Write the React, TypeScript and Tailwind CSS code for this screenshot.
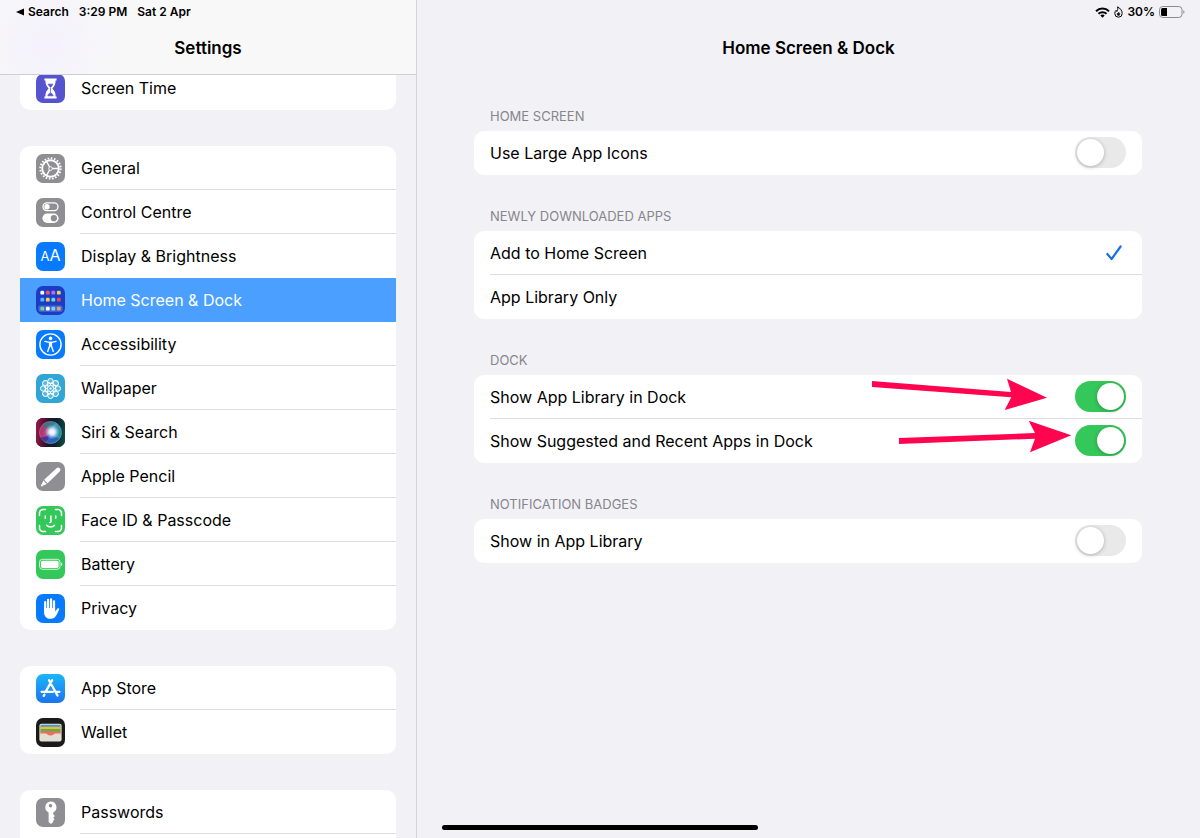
import type { ReactNode } from "react";
import clsx from "clsx";

const GeneralIcon = (
  <svg viewBox="0 0 29 29" className="size-full bg-[#8e8e93]" fill="none" stroke="#fff">
    <circle cx="14.5" cy="14.5" r="10.2" strokeWidth="2" strokeDasharray="1.6 1.604" />
    <circle cx="14.5" cy="14.5" r="8.3" strokeWidth="1.9" />
    <circle cx="14.5" cy="14.5" r="1.8" strokeWidth="1" />
    <path d="M16.3 14.5H22M13.6 13l-3-5.4M13.6 16l-3 5.4" strokeWidth="1.4" />
  </svg>
);

const ControlCentreIcon = (
  <svg viewBox="0 0 29 29" className="size-full bg-[#8e8e93]">
    <rect x="7" y="4.8" width="15" height="7.8" rx="3.9" fill="none" stroke="#fff" strokeWidth="1.3" />
    <circle cx="11" cy="8.7" r="2.7" fill="#fff" />
    <rect x="6.4" y="15.5" width="16.2" height="9.4" rx="4.7" fill="#fff" />
    <circle cx="17.9" cy="20.2" r="3.1" fill="#8e8e93" />
  </svg>
);

const DisplayIcon = (
  <span className="flex size-full items-baseline justify-center bg-[#087aff] leading-[29px] text-white">
    <span className="text-[13px]">A</span>
    <span className="text-base">A</span>
  </span>
);

const dots = [
  ["#fff", "#f2526b", "#b36df0", "#e8d94c"],
  ["#4fb7f5", "#f6d24a", "#66d6f2", "#e8445e"],
];

const HomeScreenIcon = (
  <svg viewBox="0 0 29 29" className="size-full bg-[#1c3cc6]">
    {dots.map((row, y) =>
      row.map((color, x) => (
        <rect key={`${x}-${y}`} x={4.4 + x * 5.5} y={4.8 + y * 7} width="3.8" height="3.8" rx="1.2" fill={color} />
      )),
    )}
    <rect x="2.4" y="19.4" width="24.2" height="6.4" rx="1.8" fill="#4468d8" />
    {["#6fd888", "#fff", "#7fd0f5", "#e8a06c"].map((color, x) => (
      <rect key={color} x={4.4 + x * 5.5} y="20.7" width="3.8" height="3.8" rx="1.2" fill={color} />
    ))}
  </svg>
);

const AccessibilityIcon = (
  <svg viewBox="0 0 29 29" className="size-full bg-[#087aff]">
    <circle cx="14.5" cy="14.5" r="10.6" fill="none" stroke="#fff" strokeWidth="1.4" />
    <circle cx="14.5" cy="8.4" r="1.8" fill="#fff" />
    <path d="M13 11.8h3v5h-3z" fill="#fff" />
    <path
      d="M8.9 11.4l4.4 1h2.4l4.400-1M13.600 12.600v3.400l-1.900 5.400M15.400 12.600v3.400l1.900 5.400"
      fill="none"
      stroke="#fff"
      strokeWidth="1.4"
      strokeLinecap="round"
      strokeLinejoin="round"
    />
  </svg>
);

const WallpaperIcon = (
  <svg viewBox="0 0 29 29" className="size-full bg-[#31a6d6]">
    <g fill="#8fd3ee" fillOpacity="0.4" stroke="#fff" strokeWidth="1">
      {[0, 45, 90, 135, 180, 225, 270, 315].map((angle) => (
        <g key={angle} transform={`rotate(${angle} 14.5 14.5)`}>
          <circle cx="14.5" cy="7.2" r="2.7" />
          <circle cx="16.200" cy="10.400" r="1.700" />
        </g>
      ))}
    </g>
    <circle cx="14.5" cy="14.5" r="2.9" fill="#31a6d6" stroke="#fff" strokeWidth="1" />
    <circle cx="14.5" cy="14.5" r="1.2" fill="#fff" />
  </svg>
);

const SiriIcon = (
  <svg viewBox="0 0 29 29" className="size-full bg-[#15121f]">
    <defs>
      <linearGradient id="siri-orb" x1="0" y1="0.3" x2="1" y2="0.5">
        <stop offset="0" stopColor="#c91f5d" />
        <stop offset="0.35" stopColor="#b04a86" />
        <stop offset="0.6" stopColor="#4a9ac8" />
        <stop offset="1" stopColor="#1f8f96" />
      </linearGradient>
      <linearGradient id="siri-back" x1="0" y1="0.4" x2="1" y2="0.5">
        <stop offset="0" stopColor="#a01346" />
        <stop offset="0.45" stopColor="#1b1426" />
        <stop offset="0.7" stopColor="#10202a" />
        <stop offset="1" stopColor="#0c4a48" />
      </linearGradient>
      <radialGradient id="siri-glow">
        <stop offset="0" stopColor="#fff" />
        <stop offset="0.4" stopColor="#eef3ff" stopOpacity="0.9" />
        <stop offset="1" stopColor="#9fc4ff" stopOpacity="0" />
      </radialGradient>
    </defs>
    <rect width="29" height="29" fill="url(#siri-back)" />
    <circle cx="14.5" cy="14.5" r="11" fill="url(#siri-orb)" stroke="#6c9aa8" strokeWidth="0.7" />
    <path d="M4.500 19c4 1 7-1 10-5 0 5-2 8-5 10-2-1-4-3-5-5z" fill="#2a2f9a" fillOpacity="0.8" />
    <path d="M15 15c3 4 6 5 8 5-3 5-9 6-13 4 3-2 4-5 5-9z" fill="#1f4fc0" fillOpacity="0.75" />
    <path d="M6 8.500c3-4 9-6 14-3-3 1-5 4-5.500 8-3-3-5.500-4.500-8.500-5z" fill="#1f7f80" fillOpacity="0.7" />
    <circle cx="16" cy="14" r="7.500" fill="url(#siri-glow)" />
  </svg>
);

const PencilIcon = (
  <svg viewBox="0 0 29 29" className="size-full bg-[#8e8e93]" fill="#fff">
    <path d="M20.500 6.300a2.300 2.300 0 0 1 3.300 0 2.300 2.300 0 0 1-.1 3.300L11.600 21.200l-3.500-3.500z" />
    <path d="M7.400 18.500l3.400 3.400-3.500 1.600-1.500-1.500z" />
    <circle cx="5.900" cy="23.400" r="1.100" />
  </svg>
);

const FaceIdIcon = (
  <svg
    viewBox="0 0 29 29"
    className="size-full bg-[#34c759]"
    fill="none"
    stroke="#fff"
    strokeWidth="1.5"
    strokeLinecap="round"
  >
    <path d="M3.500 9.500V7A3.500 3.500 0 0 1 7 3.500h2.500M19.500 3.500H22A3.500 3.500 0 0 1 25.500 7v2.500M25.500 19.500V22a3.500 3.500 0 0 1-3.500 3.500h-2.500M9.500 25.500H7A3.500 3.500 0 0 1 3.500 22v-2.500" />
    <path d="M9.300 10v2.200M19.700 10v2.200M14.900 10v5.500c0 .8-.4 1.100-1.200 1.100M10.700 19.400c2 2 5.800 2 7.800 0" />
  </svg>
);

const BatteryIcon = (
  <svg viewBox="0 0 29 29" className="size-full bg-[#34c759]">
    <rect x="3.600" y="9.300" width="20.400" height="10" rx="2.800" fill="none" stroke="#d6f4de" />
    <rect x="5" y="10.700" width="17.600" height="7.200" rx="1.600" fill="#fff" />
    <path d="M25.200 12.600c1.500.3 1.500 3.100 0 3.400z" fill="#fff" />
  </svg>
);

const PrivacyIcon = (
  <svg viewBox="0 0 29 29" className="size-full bg-[#087aff]">
    <g stroke="#fff" strokeWidth="2.200" strokeLinecap="round">
      <path d="M9.200 8v9M12.100 5.800v10M15.100 5.400v10M18 7.300v10" />
    </g>
    <path
      d="M8.100 14h11v3.600l2.200-2.900c.8-1 2.300-.4 1.900.8l-2.400 5.100c-1.300 2.800-3.300 4.200-6.200 4.200-4.200 0-6.500-2.600-6.500-6.600z"
      fill="#fff"
    />
  </svg>
);

const AppStoreIcon = (
  <svg viewBox="0 0 29 29" className="size-full">
    <defs>
      <linearGradient id="store" x1="0" y1="0" x2="0" y2="1">
        <stop offset="0" stopColor="#1cb5fa" />
        <stop offset="1" stopColor="#1b74ee" />
      </linearGradient>
    </defs>
    <rect width="29" height="29" fill="url(#store)" />
    <path
      d="M16.2 6.2L9.5 17.8M13 6.2l8.5 15.3M5.6 17.8h11.3M20.1 17.8h3.3M8.4 20.6l-.7 1.2"
      stroke="#fff"
      strokeWidth="2.3"
      strokeLinecap="round"
    />
  </svg>
);

const WalletIcon = (
  <svg viewBox="0 0 29 29" className="size-full bg-[#1c1b1c]">
    <rect x="3.400" y="5.800" width="22.200" height="17.600" rx="2" fill="#e6e1d6" />
    <rect x="4.400" y="6.800" width="20.200" height="4" rx="1.200" fill="#4a9cc9" />
    <rect x="4.400" y="8.800" width="20.200" height="3" fill="#f0b938" />
    <rect x="4.400" y="11" width="20.200" height="3.400" fill="#65ad4c" />
    <path d="M4.400 13.600h20.200v2.800h-5.500c-1.600 0-2 2.400-4.600 2.400s-3-2.400-4.600-2.400H4.400z" fill="#ec6e5d" />
    <path d="M4.400 15.400h5c1.800 0 2.300 2.200 5.100 2.200s3.300-2.200 5.100-2.200h5v6a1 1 0 0 1-1 1H5.400a1 1 0 0 1-1-1z" fill="#e3ded3" />
  </svg>
);

const PasswordsIcon = (
  <svg viewBox="0 0 29 29" className="size-full bg-[#8e8e93]">
    <path
      fillRule="evenodd"
      d="M14.500 3.400a5.800 5.800 0 0 1 2.700 11v1.800l1.600 1.700-1.600 1.800 1.300 1.500-1.300 1.600v1.200l-2.300 2.100-2.300-2.100v-9.600a5.800 5.800 0 0 1 1.900-11zm0 2.500a1.800 1.800 0 1 0 0 3.600 1.800 1.800 0 0 0 0-3.600z"
      fill="#fff"
    />
  </svg>
);

const ScreenTimeIcon = (
  <svg viewBox="0 0 29 29" className="size-full bg-[#5653ce]">
    <path
      d="M8.400 4.400h12.200v2.200h-1c0 4-1 5.600-3.200 7.900 2.200 2.300 3.200 3.900 3.200 7.900h1v2.200H8.400v-2.200h1c0-4 1-5.600 3.200-7.900-2.200-2.300-3.200-3.900-3.200-7.900h-1z"
      fill="#fff"
    />
    <path
      d="M12 10.200h5l-2.500 3.200zM14.500 14v5.500M11.800 21.800c.5-1.800 1.500-2.600 2.700-2.600s2.200.8 2.700 2.600z"
      fill="#5653ce"
      stroke="#5653ce"
      strokeWidth="0.700"
    />
  </svg>
);

type Item = { label: string; icon: ReactNode };

const mainItems: Item[] = [
  { label: "General", icon: GeneralIcon },
  { label: "Control Centre", icon: ControlCentreIcon },
  { label: "Display & Brightness", icon: DisplayIcon },
  { label: "Home Screen & Dock", icon: HomeScreenIcon },
  { label: "Accessibility", icon: AccessibilityIcon },
  { label: "Wallpaper", icon: WallpaperIcon },
  { label: "Siri & Search", icon: SiriIcon },
  { label: "Apple Pencil", icon: PencilIcon },
  { label: "Face ID & Passcode", icon: FaceIdIcon },
  { label: "Battery", icon: BatteryIcon },
  { label: "Privacy", icon: PrivacyIcon },
];

const storeItems: Item[] = [
  { label: "App Store", icon: AppStoreIcon },
  { label: "Wallet", icon: WalletIcon },
];

const active = "Home Screen & Dock";

function NavGroup({ items, open = false }: { items: Item[]; open?: boolean }) {
  return (
    <ul className={clsx("overflow-hidden bg-white", open ? "flex-1 rounded-t-[10px]" : "shrink-0 rounded-[10px]")}>
      {items.map((item, i) => {
        const selected = item.label === active;
        const divider = !selected && (open || i < items.length - 1) && items[i + 1]?.label !== active;

        return (
          <li key={item.label}>
            <a
              href="#"
              aria-current={selected ? "page" : undefined}
              className={clsx("flex h-11 items-center gap-[15px] pl-4", selected && "bg-[#4a9fff] text-white")}
            >
              <span className="size-[29px] shrink-0 overflow-hidden rounded-[7px]">{item.icon}</span>
              <span
                className={clsx(
                  "flex h-full flex-1 items-center border-b pl-px",
                  divider ? "border-[#dddde0]" : "border-transparent",
                )}
              >
                {item.label}
              </span>
            </a>
          </li>
        );
      })}
    </ul>
  );
}

function Section({ title, children }: { title: string; children: ReactNode }) {
  return (
    <section>
      <h2 className="flex h-14 items-end px-4 pb-[7px] text-[13px] leading-4 text-[#86868b]">{title}</h2>
      <div className="relative rounded-[10px] bg-white">{children}</div>
    </section>
  );
}

function SwitchRow({ label, on = false, divider = false }: { label: string; on?: boolean; divider?: boolean }) {
  return (
    <label className="block pl-4">
      <span
        className={clsx(
          "flex h-11 items-center justify-between border-b pr-4",
          divider ? "border-[#dddde0]" : "border-transparent",
        )}
      >
        {label}
        <input
          type="checkbox"
          role="switch"
          defaultChecked={on}
          className="h-[31px] w-[51px] appearance-none rounded-full bg-[#e9e9ea] p-0.5 before:block before:size-[27px] before:rounded-full before:bg-white before:shadow-[0_1px_4px_rgba(0,0,0,0.25)] checked:bg-[#34c759] checked:before:ml-5"
        />
      </span>
    </label>
  );
}

function ChoiceRow({ label, on = false, divider = false }: { label: string; on?: boolean; divider?: boolean }) {
  return (
    <label className="block pl-4">
      <input type="radio" name="new-apps" defaultChecked={on} className="peer sr-only" />
      <span
        className={clsx(
          "flex h-11 items-center justify-between border-b pr-5 peer-checked:[&>svg]:visible",
          divider ? "border-[#dddde0]" : "border-transparent",
        )}
      >
        {label}
        <svg viewBox="0 0 16 16" className="invisible size-4" fill="none" stroke="#1472e6" strokeWidth="2.2">
          <path d="M1.300 9l4.300 5L14.600 1.500" strokeLinecap="round" strokeLinejoin="round" />
        </svg>
      </span>
    </label>
  );
}

function StatusIcons() {
  return (
    <div className="flex items-center justify-end gap-1 pr-[15px]">
      <svg viewBox="0 0 15 11" className="h-[11px] w-[15px]" fill="none" stroke="#000" strokeWidth="2">
        <path d="M1 4.200a9.300 9.300 0 0 1 13 0M3.500 6.800a5.700 5.700 0 0 1 8 0" />
        <path d="M7.500 10.800L5.300 8.600a3.100 3.100 0 0 1 4.400 0z" fill="#000" stroke="none" />
      </svg>
      <svg viewBox="0 0 9 12" className="h-3 w-[9px]" fill="none" stroke="#000">
        <path d="M3.600.8c2.600 1.300 4.600 4 4.600 6.700a3.700 3.700 0 0 1-7.400 0c0-1.500.5-2.500 1.300-3.200l.7 1.200c1-1.200 1.300-2.800.8-4.700z" />
        <path d="M4.700 6.200c.8.700 1.100 1.300 1.100 2a1.300 1.300 0 0 1-2.600 0c0-.6.300-.9.600-1.200l.4.400z" fill="#000" strokeWidth="0.500" />
      </svg>
      <span>30%</span>
      <svg viewBox="0 0 26 12" className="h-3 w-[26px]">
        <rect x="0.500" y="0.500" width="22.500" height="11" rx="3.200" fill="none" stroke="#8c8c90" />
        <path d="M3.500 2H8v8H3.500A1.500 1.500 0 0 1 2 8.500v-5A1.500 1.500 0 0 1 3.500 2z" />
        <path d="M24.300 4.200c1.600.5 1.600 3.100 0 3.600z" fill="#8c8c90" />
      </svg>
    </div>
  );
}

export default function App() {
  return (
    <div className="relative flex h-screen overflow-hidden bg-[#f2f1f6] font-['Inter',sans-serif] text-base text-black">
      <aside className="flex w-[417px] shrink-0 flex-col border-r border-[#d5d5d9]">
        <header className="z-10 h-[75px] shrink-0 border-b border-[#cfcfd3] bg-[#f8f8f8] bg-[radial-gradient(circle_at_46px_44px,#f4f1fc,#f8f8f8_80px)]">
          <div className="flex h-6 items-center gap-[10px] pl-4 text-xs font-semibold">
            <a href="#" className="flex items-center gap-1">
              <svg viewBox="0 0 8 8" className="size-2">
                <path d="M8 .5v7L0 4z" />
              </svg>
              Search
            </a>
            <span>3:29 PM</span>
            <span>Sat 2 Apr</span>
          </div>
          <h1 className="flex h-[50px] items-center justify-center text-[17px] font-semibold">Settings</h1>
        </header>

        {/* the list is scrolled slightly under the header */}
        <nav className="-mt-[9px] flex min-h-0 flex-1 flex-col gap-9 overflow-hidden px-5">
          <NavGroup items={[{ label: "Screen Time", icon: ScreenTimeIcon }]} />
          <NavGroup items={mainItems} />
          <NavGroup items={storeItems} />
          <NavGroup items={[{ label: "Passwords", icon: PasswordsIcon }]} open />
        </nav>
      </aside>

      <main className="min-w-0 flex-1">
        <header className="h-[75px]">
          <div className="flex h-6 items-center justify-end text-xs font-semibold">
            <StatusIcons />
          </div>
          <h1 className="flex h-[50px] items-center justify-center text-[17px] font-semibold">
            Home Screen &amp; Dock
          </h1>
        </header>

        <div className="pr-[58px] pl-[57px]">
          <Section title="HOME SCREEN">
            <SwitchRow label="Use Large App Icons" />
          </Section>
          <Section title="NEWLY DOWNLOADED APPS">
            <ChoiceRow label="Add to Home Screen" on divider />
            <ChoiceRow label="App Library Only" />
          </Section>
          <Section title="DOCK">
            <SwitchRow label="Show App Library in Dock" on divider />
            <SwitchRow label="Show Suggested and Recent Apps in Dock" on />
            <svg
              viewBox="0 0 280 88"
              className="pointer-events-none absolute top-0 right-0 h-[88px] w-[280px]"
              fill="#ff0550"
            >
              <path d="M10 6l139 11-4-13.300 40 19-42.300 12.300 6.600-12.700L10 12z" />
              <path d="M37 63l136-5-6.300-12.300 42.600 14.600-41.300 17 5-13.600L37 69z" />
            </svg>
          </Section>
          <Section title="NOTIFICATION BADGES">
            <SwitchRow label="Show in App Library" />
          </Section>
        </div>
      </main>

      <div className="absolute bottom-2 left-1/2 h-[5px] w-[316px] -translate-x-1/2 rounded-full bg-black" />
    </div>
  );
}
